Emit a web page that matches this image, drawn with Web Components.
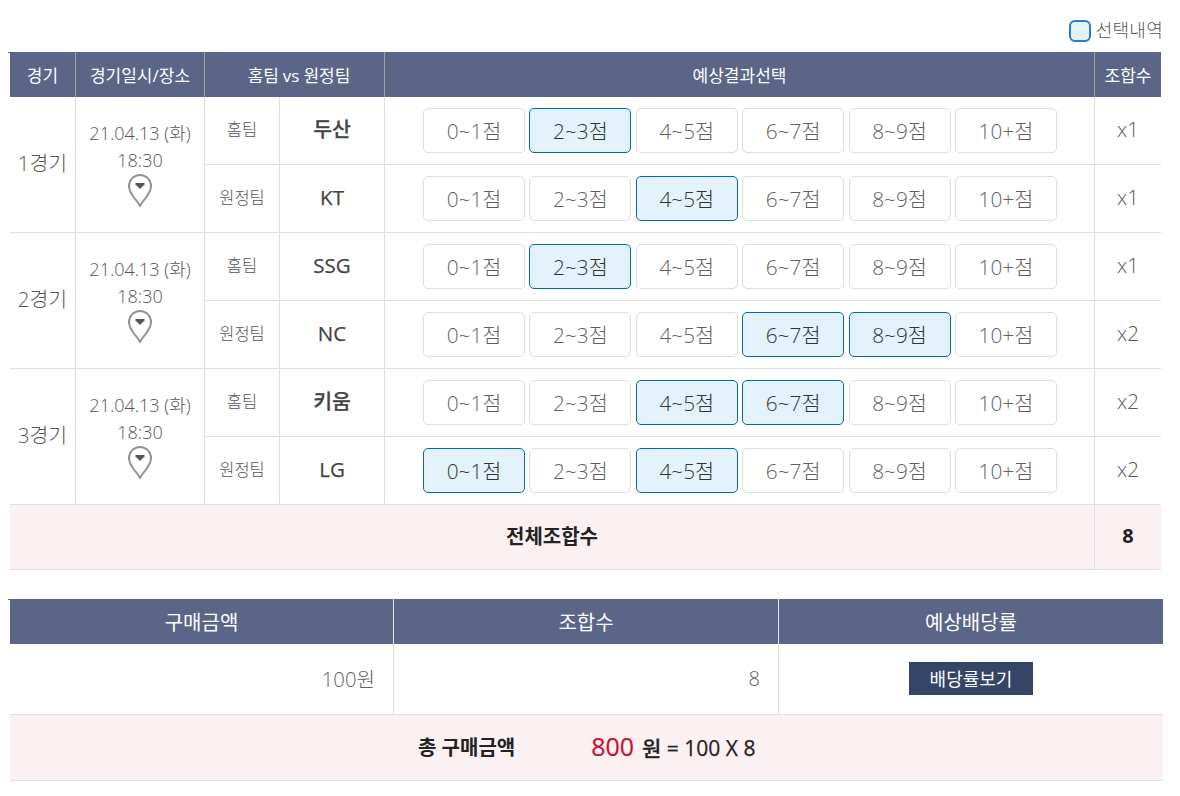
<!DOCTYPE html>
<html lang="ko"><head><meta charset="utf-8">
<style>
html,body{margin:0;padding:0;background:#fff}
body{font-family:"Open Sans","Noto Sans CJK KR",sans-serif;color:#555;font-weight:300;width:1180px;height:796px;overflow:hidden}
</style></head><body>
<bet-page>
  <select-legend slot="legend">선택내역</select-legend>
  <match-table slot="main">
    <game-group label="1경기">
      <team-row side="홈팀" team="두산" picks="1" mult="x1"></team-row>
      <team-row side="원정팀" team="KT" picks="2" mult="x1"></team-row>
    </game-group>
    <game-group label="2경기">
      <team-row side="홈팀" team="SSG" picks="1" mult="x1"></team-row>
      <team-row side="원정팀" team="NC" picks="3,4" mult="x2"></team-row>
    </game-group>
    <game-group label="3경기">
      <team-row side="홈팀" team="키움" picks="2,3" mult="x2"></team-row>
      <team-row side="원정팀" team="LG" picks="0,2" mult="x2"></team-row>
    </game-group>
  </match-table>
  <buy-summary slot="buy"></buy-summary>
</bet-page>
<script>
const tpl=(el,html)=>{el.attachShadow({mode:'open'}).innerHTML=html};
customElements.define('bet-page',class extends HTMLElement{constructor(){super();tpl(this,`<style>
:host{display:flex;flex-direction:column;padding:0 0 0 10px}
.legend{display:flex;justify-content:flex-end;height:52px;align-items:flex-start;padding-top:20px;box-sizing:border-box;width:1153px}
.buy{margin-top:29px}
</style><div class="legend"><slot name="legend"></slot></div><slot name="main"></slot><div class="buy"><slot name="buy"></slot></div>`)}});
customElements.define('select-legend',class extends HTMLElement{constructor(){super();tpl(this,`<style>
:host{display:flex;align-items:center;gap:5px;font-size:18px;line-height:22px;color:#555}
i{display:block;width:22px;height:22px;box-sizing:border-box;border:2px solid #2a7dc0;border-radius:6px;background:#e3f2fb}
span{display:block;margin-top:-2px;letter-spacing:.25px}
</style><i></i><span><slot></slot></span>`)}});
customElements.define('match-table',class extends HTMLElement{constructor(){super();tpl(this,`<style>
:host{display:block;width:1151px;position:relative}
:host::before{content:"";position:absolute;left:-2px;top:0;width:2px;height:1px;background:#5a6587}
.head{display:grid;grid-template-columns:66px 129px 180px 710px 66px;height:45px;background:#5a6587;color:#fff;font-size:17px;font-weight:400}
.head div{display:flex;align-items:center;justify-content:center;border-right:1px solid #a3a39c;box-sizing:border-box}
.head div:last-child{border-right:0}
.head .vs{word-spacing:-.5px;padding-left:9px}
.total{display:grid;grid-template-columns:1085px 66px;height:65px;background:#fcf1f2;border-bottom:1px solid #e0e0e0;box-sizing:border-box;color:#222;font-weight:700;font-size:20px}
.total div{display:flex;align-items:center;justify-content:center;padding-bottom:4px;box-sizing:border-box}
.total div:first-child{border-right:1px solid #e0e0e0}
</style>
<div class="head"><div>경기</div><div>경기일시/장소</div><div class="vs">홈팀 vs 원정팀</div><div>예상결과선택</div><div>조합수</div></div>
<slot></slot>
<div class="total"><div>전체조합수</div><div>8</div></div>`)}});
customElements.define('game-group',class extends HTMLElement{constructor(){super();
const l=this.getAttribute('label');
tpl(this,`<style>
:host{display:grid;grid-template-columns:66px 129px 956px;height:136px}
.g,.d{border-right:1px solid #ddd;border-bottom:1px solid #e0e0e0;box-sizing:border-box;display:flex;flex-direction:column;align-items:center;justify-content:center}
.g{font-size:20.5px;padding-bottom:6px}
.d{font-size:18px;line-height:27px;justify-content:flex-start;padding-top:23px}
.rows{display:flex;flex-direction:column}
svg{display:block}
</style>
<div class="g"><span>${l}</span></div>
<div class="d"><span>21.04.13 (화)</span><span>18:30</span>
<svg width="24" height="33" viewBox="0 0 24 33" fill="none"><path d="M12 32 C10 27 1 20.500 1 12 A11 11 0 0 1 23 12 C23 20.500 14 27 12 32Z" stroke="#939393" stroke-width="2"/><path d="M7.500 9h9v1.500L12 15 7.500 10.500z" fill="#555"/></svg></div>
<div class="rows"><slot></slot></div>`)}});
customElements.define('team-row',class extends HTMLElement{constructor(){super();
const picks=(this.getAttribute('picks')||'').split(',');
const labels=['0~1점','2~3점','4~5점','6~7점','8~9점','10+점'];
const team=this.getAttribute('team');
tpl(this,`<style>
:host{display:grid;grid-template-columns:75px 105px 710px 66px;height:68px;border-bottom:1px solid #e0e0e0;box-sizing:border-box}
.c{display:flex;align-items:center;justify-content:center;border-right:1px solid #ddd;box-sizing:border-box;padding-bottom:4px}
.s{font-size:16.500px}
.t{font-size:20.500px;font-weight:500;-webkit-text-stroke:.25px #444;color:#444;padding-bottom:3px}
.t.ko{padding-bottom:5px}
.m{font-size:20.500px;border-right:0;padding-bottom:3px}
.b{display:flex;gap:4.4px;justify-content:center;align-items:flex-start;padding:11px 0 0 1px}
</style>
<div class="c s">${this.getAttribute('side')}</div>
<div class="c t${/[가-힣]/.test(team)?' ko':''}">${team}</div>
<div class="c b">${labels.map((x,i)=>`<score-btn ${picks.includes(String(i))?'on':''}>${x}</score-btn>`).join('')}</div>
<div class="c m">${this.getAttribute('mult')}</div>`)}});
customElements.define('score-btn',class extends HTMLElement{constructor(){super();tpl(this,`<style>
:host{display:flex;align-items:center;justify-content:center;width:102px;height:45px;box-sizing:border-box;border:1px solid #ddd;border-radius:5px;padding-bottom:1px;font-size:20.800px;background:#fff;color:#5f5f5f}
:host([on]){background:#e3f2fb;border-color:#0068b7;color:#333}
</style><slot></slot>`)}});
customElements.define('buy-summary',class extends HTMLElement{constructor(){super();tpl(this,`<style>
:host{display:block;width:1153px;position:relative}
:host::before{content:"";position:absolute;left:-2px;top:0;width:2px;height:1px;background:#5a6587}
.r{display:grid;grid-template-columns:384px 385px 384px;box-sizing:border-box}
.r>div{display:flex;align-items:center;box-sizing:border-box;justify-content:center;border-right:1px solid #ddd}
.r>div:last-child{border-right:0}
.h{height:45px;background:#5a6587;color:#fff;font-size:20px;font-weight:400}
.h>div{border-right-color:#e4e4e4}
.v{height:71px;border-bottom:1px solid #e0e0e0;font-size:20.200px;color:#5f5f5f}
.v>div.n{justify-content:flex-end;padding-right:18px;padding-bottom:2px}
button{all:unset;background:#344568;color:#fff;font-size:18px;font-weight:400;height:33px;width:124px;display:flex;align-items:center;justify-content:center;margin-bottom:2px}
.tot{height:66px;background:#fcf1f2;border-bottom:1px solid #e0e0e0;box-sizing:border-box;display:flex;align-items:center;justify-content:flex-start;padding:0 0 2px 408px;color:#222;font-weight:600;font-size:20px}
.tot em{font-style:normal;color:#c8102e;font-size:25px;font-weight:500;-webkit-text-stroke:.2px #c8102e;margin-left:76px;margin-right:8px;margin-top:-1px}
.tot span.e{font-size:21px;font-weight:500;-webkit-text-stroke:.25px #222}
</style>
<div class="r h"><div>구매금액</div><div>조합수</div><div>예상배당률</div></div>
<div class="r v"><div class="n">100원</div><div class="n">8</div><div><button>배당률보기</button></div></div>
<div class="tot"><span>총 구매금액</span><em>800</em><span class="e">원 = 100 X 8</span></div>`)}});
</script>
</body></html>
